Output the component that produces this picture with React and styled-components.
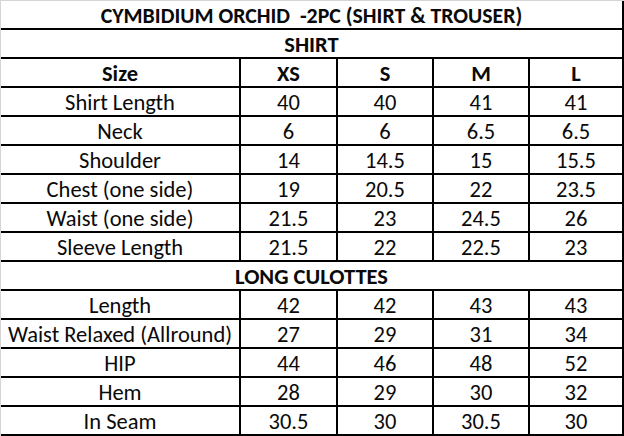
import React from "react";
import styled, { createGlobalStyle } from "styled-components";

const Global = createGlobalStyle`
  html, body { margin: 0; padding: 0; background: #fff; }
  body { width: 624px; height: 436px; overflow: hidden; }
`;

const Sheet = styled.div`
  width: 624px;
  height: 436px;
  box-sizing: border-box;
  border-left: 1px solid #d4d4d4;
  border-top: 1px solid #d4d4d4;
  background: #fff;
  font-family: Carlito, Calibri, Lato, sans-serif;
  color: #0a0a0a;
  font-size: 22.5px;
  line-height: 1;
`;

const Row = styled.div`
  display: grid;
  grid-template-columns: ${(p) => (p.$span ? "623px" : "240px 97px 96px 96px 94px")};
  height: 29px;
  box-sizing: border-box;
  border-bottom: 2px solid #000;
`;

const Cell = styled.div`
  box-sizing: border-box;
  border-right: 2px solid #000;
  display: flex;
  align-items: center;
  justify-content: center;
  padding-top: 3px;
  white-space: pre;
  font-weight: ${(p) => (p.$bold ? 700 : 400)};
  font-size: ${(p) => (p.$title ? "21.8px" : "inherit")};
`;

const shirt = [
  ["Shirt Length", "40", "40", "41", "41"],
  ["Neck", "6", "6", "6.5", "6.5"],
  ["Shoulder", "14", "14.5", "15", "15.5"],
  ["Chest (one side)", "19", "20.5", "22", "23.5"],
  ["Waist (one side)", "21.5", "23", "24.5", "26"],
  ["Sleeve Length", "21.5", "22", "22.5", "23"],
];

const culottes = [
  ["Length", "42", "42", "43", "43"],
  ["Waist Relaxed (Allround)", "27", "29", "31", "34"],
  ["HIP", "44", "46", "48", "52"],
  ["Hem", "28", "29", "30", "32"],
  ["In Seam", "30.5", "30", "30.5", "30"],
];

const DataRow = ({ cells, bold }) => (
  <Row>
    {cells.map((c, i) => (
      <Cell key={i} $bold={bold}>{c}</Cell>
    ))}
  </Row>
);

const SpanRow = ({ children, title }) => (
  <Row $span>
    <Cell $bold $title={title}>{children}</Cell>
  </Row>
);

export default function App() {
  return (
    <>
      <Global />
      <Sheet>
        <SpanRow title>{"CYMBIDIUM ORCHID  -2PC (SHIRT & TROUSER)"}</SpanRow>
        <SpanRow>SHIRT</SpanRow>
        <DataRow bold cells={["Size", "XS", "S", "M", "L"]} />
        {shirt.map((r) => (
          <DataRow key={r[0]} cells={r} />
        ))}
        <SpanRow>LONG CULOTTES</SpanRow>
        {culottes.map((r) => (
          <DataRow key={r[0]} cells={r} />
        ))}
      </Sheet>
    </>
  );
}
